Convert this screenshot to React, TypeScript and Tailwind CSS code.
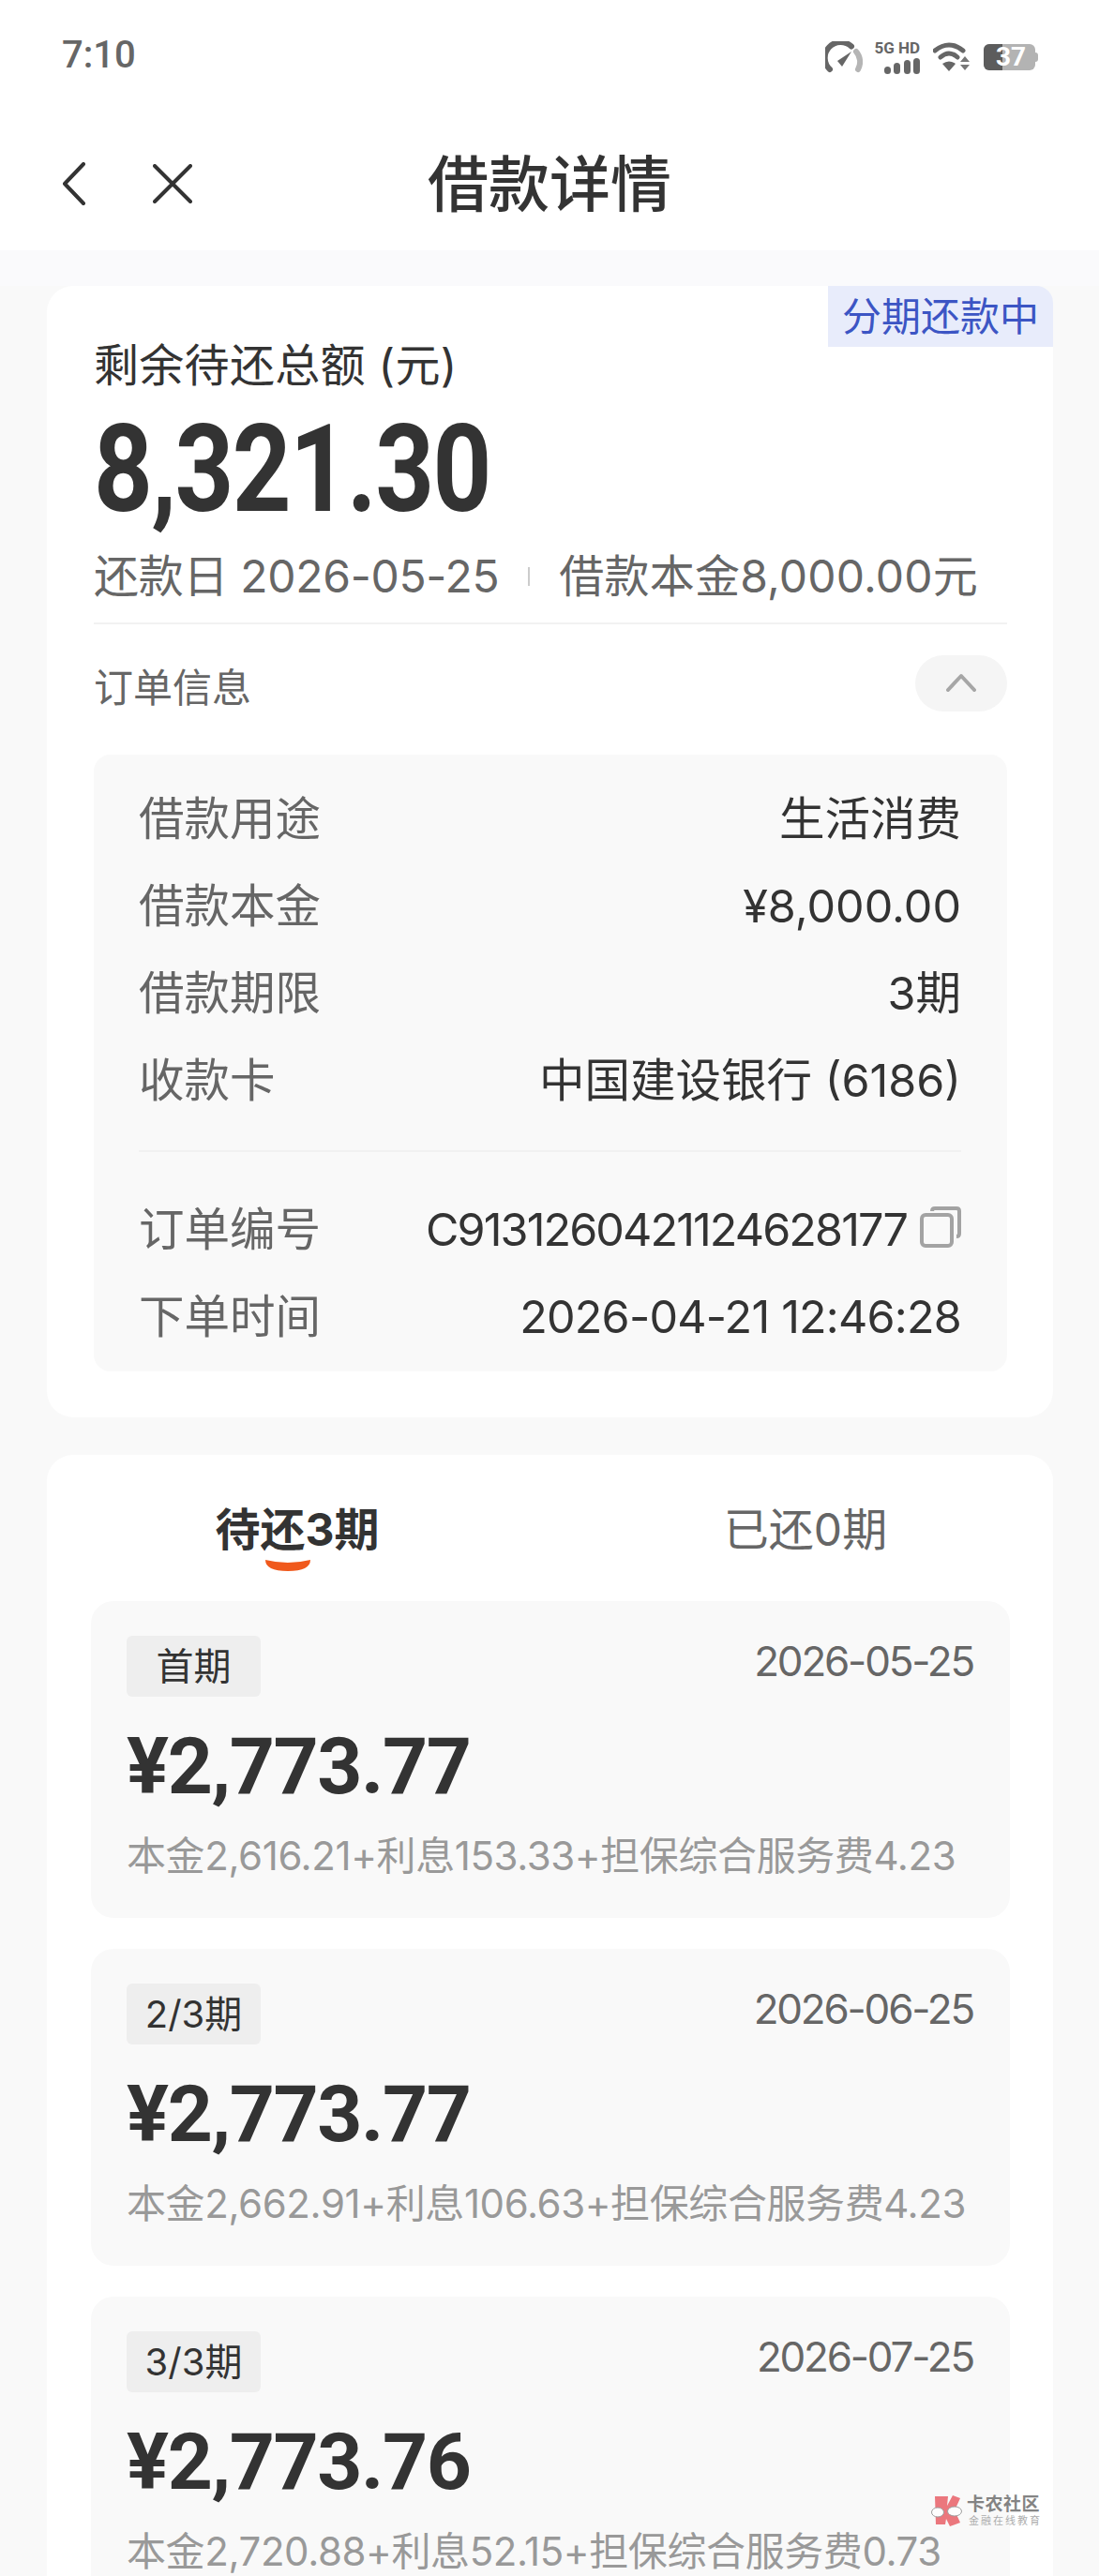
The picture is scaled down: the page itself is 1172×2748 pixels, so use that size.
const sans = "font-['Inter','Noto_Sans_CJK_SC',sans-serif]";

const StatusIcons = () => (
  <div className="flex items-center">
    <svg width="40" height="34" viewBox="0 0 40 34" fill="none">
      <path d="M5 30 A16.5 16.5 0 0 1 28 5.5" stroke="#666" strokeWidth="6" strokeLinecap="round" />
      <path d="M33 11 A16.5 16.5 0 0 1 35 30" stroke="#b5b5b5" strokeWidth="6" strokeLinecap="round" />
      <path d="M13 21 L28 11 L18 27 Z" fill="#666" />
    </svg>
    <div className="flex flex-col items-end ml-[9px] w-[52px]">
      <span className="text-[17px] leading-[15px] font-bold text-[#666] whitespace-nowrap font-['Roboto',sans-serif]">5G HD</span>
      <div className="flex items-end gap-[3.5px] mt-[3px]">
        <div className="w-[7px] h-[8px] rounded-full bg-[#666]" />
        <div className="w-[7px] h-[12px] rounded-full bg-[#666]" />
        <div className="w-[7px] h-[15px] rounded-full bg-[#666]" />
        <div className="w-[7px] h-[17px] rounded-full bg-[#666]" />
      </div>
    </div>
    <svg width="40" height="32" viewBox="0 0 40 32" fill="none" className="ml-[14px]">
      <path d="M2 9 Q17 -3 32 9" stroke="#666" strokeWidth="5" strokeLinecap="round" />
      <path d="M8 16 Q17 8 26 16" stroke="#666" strokeWidth="5" strokeLinecap="round" />
      <path d="M17 31 L10 23 Q17 18 24 23 Z" fill="#666" />
      <path d="M34 15 L39 21 H29 Z M29 24 H39 L34 30 Z" fill="#777" />
    </svg>
    <div className="relative flex items-center ml-[14px]">
      <div className="flex w-[55px] h-[28px] rounded-[6px] overflow-hidden bg-[#b3b3b3]">
        <div className="w-[20px] bg-[#5c5c5c]" />
      </div>
      <div className="w-[3px] h-[10px] rounded-r bg-[#b3b3b3]" />
      <span className="absolute left-[13px] top-0 text-[28px] leading-[28px] font-bold text-white font-['Roboto',sans-serif]">37</span>
    </div>
  </div>
);

const Header = () => (
  <div className="bg-white h-[267px]">
    <div className="flex items-center justify-between h-[122px] pl-[66px] pr-[65px]">
      <span className="-mt-[4px] text-[40px] leading-none font-medium text-[#666] font-['Roboto',sans-serif]">7:10</span>
      <StatusIcons />
    </div>
    <div className="relative flex items-center justify-center h-[78px] mt-[35px]">
      <span className="text-[65px] leading-none font-medium text-[#333]">借款详情</span>
      <div className="absolute left-[66px] top-[16px] flex items-center gap-[71px]">
        <svg width="26" height="46" viewBox="0 0 26 46" fill="none">
          <path d="M23 2 L3 23 L23 44" stroke="#333" strokeWidth="4" strokeLinecap="round" strokeLinejoin="round" />
        </svg>
        <svg width="42" height="42" viewBox="0 0 42 42" fill="none">
          <path d="M2 2 L40 40 M40 2 L2 40" stroke="#333" strokeWidth="4" strokeLinecap="round" />
        </svg>
      </div>
    </div>
  </div>
);

const InfoRow = ({ label, value, icon, track }: { label: string; value: string; icon?: boolean; track?: string }) => (
  <div className="flex items-center justify-between h-[93px]">
    <span className="text-[48.5px] leading-none text-[#666]">{label}</span>
    <div className="flex items-center">
      <span className={`text-[48.5px] leading-none text-[#333] ${track ?? ""}`}>{value}</span>
      {icon && (
        <svg width="44" height="44" viewBox="0 0 44 44" fill="none" className="ml-[14px] -mt-[8px]">
          <path d="M13 5 Q13 2 16 2 H39 Q42 2 42 5 V29 Q42 32 39 32" stroke="#a3a3a3" strokeWidth="4" />
          <rect x="2" y="9" width="32" height="33" rx="4" stroke="#a3a3a3" strokeWidth="4" />
        </svg>
      )}
    </div>
  </div>
);

const SummaryCard = () => (
  <section className="relative ml-[50px] mr-[49px] h-[1207px] bg-white rounded-[28px] pl-[50px] pr-[49px] pt-[56px]">
    <div className="absolute right-0 top-0 w-[240px] h-[65px] rounded-tr-[18px] bg-[#e8ecfb] flex items-center justify-center text-[42px] leading-none text-[#3c55c4]">
      分期还款中
    </div>
    <div className="text-[48px] leading-[58px] text-[#333] tracking-[0.3px]">剩余待还总额 (元)</div>
    <div className="mt-[21px] text-[129px] leading-[122px] font-bold text-[#333] font-['Roboto',sans-serif] tracking-[-2px] origin-left scale-x-[0.85]">8,321.30</div>
    <div className="mt-[23px] flex items-center text-[48px] leading-[60px] text-[#666] h-[60px]">
      <span className="tracking-[-0.3px]">还款日 2026-05-25</span>
      <div className="w-[2px] h-[20px] bg-[#ccc] mx-[31px]" />
      <span className="tracking-[0.2px]">借款本金8,000.00元</span>
    </div>
    <div className="mt-[19px] h-[2px] bg-[#f2f2f2]" />
    <div className="mt-[33px] flex items-center justify-between h-[60px]">
      <span className="mt-[9px] text-[42px] leading-none text-[#666]">订单信息</span>
      <div className="w-[98px] h-[60px] rounded-full bg-[#f5f5f5] flex items-center justify-center">
        <svg width="32" height="20" viewBox="0 0 32 20" fill="none" className="-mt-[3px]">
          <path d="M2 18 L16 3 L30 18" stroke="#a6a6a6" strokeWidth="4" strokeLinecap="round" strokeLinejoin="round" />
        </svg>
      </div>
    </div>
    <div className="mt-[46px] h-[658px] bg-[#f9f9f9] rounded-[18px] pl-[48px] pr-[49px] pt-[23px]">
      <InfoRow label="借款用途" value="生活消费" />
      <InfoRow label="借款本金" value="¥8,000.00" />
      <InfoRow label="借款期限" value="3期" />
      <InfoRow label="收款卡" value="中国建设银行 (6186)" />
      <div className="mt-[27px] mb-[37px] h-[2px] bg-[#f1f1f1]" />
      <InfoRow label="订单编号" value="C9131260421124628177" icon track="tracking-[-1.9px]" />
      <InfoRow label="下单时间" value="2026-04-21 12:46:28" track="tracking-[-0.8px]" />
    </div>
  </section>
);

const Instalment = ({ tag, date, amount, detail }: { tag: string; date: string; amount: string; detail: string }) => (
  <div className="h-[338px] bg-[#f9f9f9] rounded-[24px] pl-[38px] pr-[39px] pt-[37px]">
    <div className="flex items-start justify-between">
      <div className="w-[143px] h-[65px] rounded-[6px] bg-[#eeeeee] flex items-center justify-center text-[40px] leading-none text-[#333]">{tag}</div>
      <span className="text-[44px] leading-[54px] text-[#666] tracking-[-2.2px]">{date}</span>
    </div>
    <div className="mt-[27px] text-[84px] leading-[96px] font-bold text-[#333] font-['Roboto',sans-serif] tracking-[-1.4px]">{amount}</div>
    <div className="mt-[21px] text-[42px] leading-[52px] text-[#999] whitespace-nowrap tracking-[-0.4px]">{detail}</div>
  </div>
);

const ScheduleCard = () => (
  <section className="mt-[40px] ml-[50px] mr-[49px] bg-white rounded-[28px] pl-[47px] pr-[46px]">
    <div className="relative flex h-[156px]">
      <div className="w-[440px] flex justify-center pt-[50px]">
        <span className="text-[48px] leading-[60px] font-bold text-[#333]">待还3期</span>
      </div>
      <div className="absolute left-[184px] top-[111px]">
        <svg width="52" height="14" viewBox="0 0 52 14">
          <path d="M2 1 Q26 7 50 1 Q50 13 26 13 Q2 13 2 1 Z" fill="#f0591c" />
        </svg>
      </div>
      <div className="flex-1 flex justify-center pt-[50px] pl-[104px]">
        <span className="text-[48px] leading-[60px] text-[#666]">已还0期</span>
      </div>
    </div>
    <div className="flex flex-col gap-[33px]">
      <Instalment tag="首期" date="2026-05-25" amount="¥2,773.77" detail="本金2,616.21+利息153.33+担保综合服务费4.23" />
      <Instalment tag="2/3期" date="2026-06-25" amount="¥2,773.77" detail="本金2,662.91+利息106.63+担保综合服务费4.23" />
      <Instalment tag="3/3期" date="2026-07-25" amount="¥2,773.76" detail="本金2,720.88+利息52.15+担保综合服务费0.73" />
    </div>
  </section>
);

const Watermark = () => (
  <div className="absolute left-[993px] top-[2661px] flex items-start gap-[5px] opacity-80">
    <svg width="33" height="35" viewBox="0 0 33 35">
      <path d="M4 2 H18 L17 12 L23 1 L31 4 L25 17 L31 30 L20 34 L16 26 L15 32 H5 Z" fill="#e8575f" />
      <ellipse cx="7" cy="19" rx="6.5" ry="5" fill="#fff" stroke="#888" />
      <ellipse cx="25" cy="18" rx="7.5" ry="5" fill="#fff" stroke="#888" />
    </svg>
    <div className="flex flex-col pt-[1px]">
      <span className="text-[19px] leading-[20px] font-bold text-[#666] tracking-[0.5px] whitespace-nowrap">卡农社区</span>
      <span className="text-[11px] leading-[12px] mt-[1px] ml-[2px] text-[#999] tracking-[2px] whitespace-nowrap">金融在线教育</span>
    </div>
  </div>
);

export default function App() {
  return (
    <div className={`relative w-[1172px] h-[2748px] overflow-hidden bg-[#f9f9f9] ${sans}`}>
      <Header />
      <div className="h-[38px] bg-[#fafafc]" />
      <SummaryCard />
      <ScheduleCard />
      <Watermark />
    </div>
  );
}
